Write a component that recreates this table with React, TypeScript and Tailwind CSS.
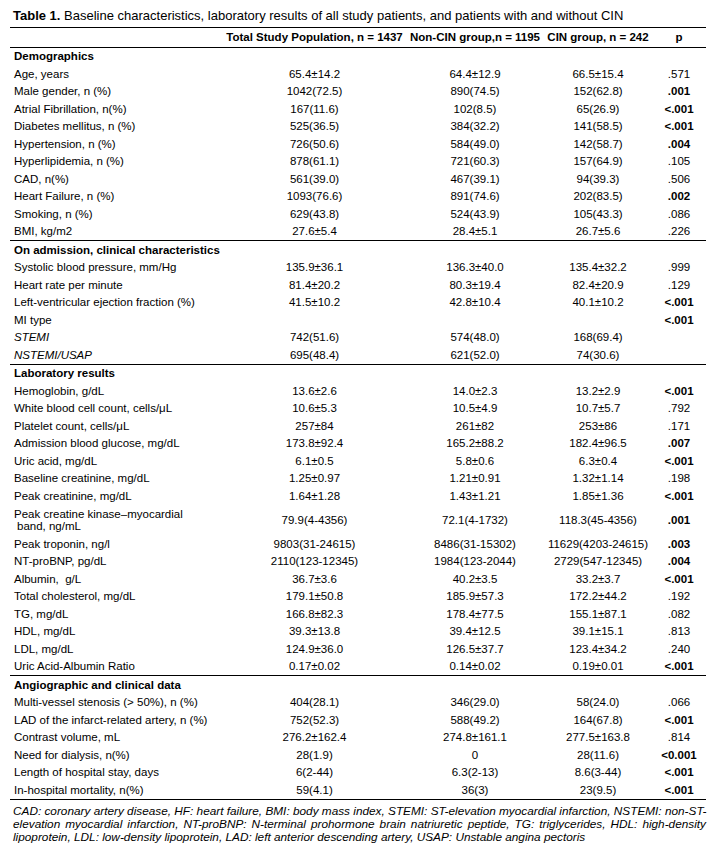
import React from "react";

type Row = {
  label: React.ReactNode;
  v?: [string, string, string];
  p?: string;
  bold?: boolean;
  italic?: boolean;
  tall?: boolean;
};

type Section = { title: string; rows: Row[] };

const sections: Section[] = [
  {
    title: "Demographics",
    rows: [
      { label: "Age, years", v: ["65.4±14.2", "64.4±12.9", "66.5±15.4"], p: ".571" },
      { label: "Male gender, n (%)", v: ["1042(72.5)", "890(74.5)", "152(62.8)"], p: ".001", bold: true },
      { label: "Atrial Fibrillation, n(%)", v: ["167(11.6)", "102(8.5)", "65(26.9)"], p: "<.001", bold: true },
      { label: "Diabetes mellitus, n (%)", v: ["525(36.5)", "384(32.2)", "141(58.5)"], p: "<.001", bold: true },
      { label: "Hypertension, n (%)", v: ["726(50.6)", "584(49.0)", "142(58.7)"], p: ".004", bold: true },
      { label: "Hyperlipidemia, n (%)", v: ["878(61.1)", "721(60.3)", "157(64.9)"], p: ".105" },
      { label: "CAD, n(%)", v: ["561(39.0)", "467(39.1)", "94(39.3)"], p: ".506" },
      { label: "Heart Failure, n (%)", v: ["1093(76.6)", "891(74.6)", "202(83.5)"], p: ".002", bold: true },
      { label: "Smoking, n (%)", v: ["629(43.8)", "524(43.9)", "105(43.3)"], p: ".086" },
      { label: "BMI, kg/m2", v: ["27.6±5.4", "28.4±5.1", "26.7±5.6"], p: ".226" },
    ],
  },
  {
    title: "On admission, clinical characteristics",
    rows: [
      { label: "Systolic blood pressure, mm/Hg", v: ["135.9±36.1", "136.3±40.0", "135.4±32.2"], p: ".999" },
      { label: "Heart rate per minute", v: ["81.4±20.2", "80.3±19.4", "82.4±20.9"], p: ".129" },
      { label: "Left-ventricular ejection fraction (%)", v: ["41.5±10.2", "42.8±10.4", "40.1±10.2"], p: "<.001", bold: true },
      { label: "MI type", v: ["", "", ""], p: "<.001", bold: true },
      { label: "STEMI", italic: true, v: ["742(51.6)", "574(48.0)", "168(69.4)"], p: "" },
      { label: "NSTEMI/USAP", italic: true, v: ["695(48.4)", "621(52.0)", "74(30.6)"], p: "" },
    ],
  },
  {
    title: "Laboratory results",
    rows: [
      { label: "Hemoglobin, g/dL", v: ["13.6±2.6", "14.0±2.3", "13.2±2.9"], p: "<.001", bold: true },
      { label: "White blood cell count, cells/μL", v: ["10.6±5.3", "10.5±4.9", "10.7±5.7"], p: ".792" },
      { label: "Platelet count, cells/μL", v: ["257±84", "261±82", "253±86"], p: ".171" },
      { label: "Admission blood glucose, mg/dL", v: ["173.8±92.4", "165.2±88.2", "182.4±96.5"], p: ".007", bold: true },
      { label: "Uric acid, mg/dL", v: ["6.1±0.5", "5.8±0.6", "6.3±0.4"], p: "<.001", bold: true },
      { label: "Baseline creatinine, mg/dL", v: ["1.25±0.97", "1.21±0.91", "1.32±1.14"], p: ".198" },
      { label: "Peak creatinine, mg/dL", v: ["1.64±1.28", "1.43±1.21", "1.85±1.36"], p: "<.001", bold: true },
      {
        label: (
          <>
            <span className="block">Peak creatine kinase–myocardial</span>
            <span className="block pl-[3px]">band, ng/mL</span>
          </>
        ),
        tall: true,
        v: ["79.9(4-4356)", "72.1(4-1732)", "118.3(45-4356)"],
        p: ".001",
        bold: true,
      },
      { label: "Peak troponin, ng/l", v: ["9803(31-24615)", "8486(31-15302)", "11629(4203-24615)"], p: ".003", bold: true },
      { label: "NT-proBNP, pg/dL", v: ["2110(123-12345)", "1984(123-2044)", "2729(547-12345)"], p: ".004", bold: true },
      { label: "Albumin,  g/L", v: ["36.7±3.6", "40.2±3.5", "33.2±3.7"], p: "<.001", bold: true },
      { label: "Total cholesterol, mg/dL", v: ["179.1±50.8", "185.9±57.3", "172.2±44.2"], p: ".192" },
      { label: "TG, mg/dL", v: ["166.8±82.3", "178.4±77.5", "155.1±87.1"], p: ".082" },
      { label: "HDL, mg/dL", v: ["39.3±13.8", "39.4±12.5", "39.1±15.1"], p: ".813" },
      { label: "LDL, mg/dL", v: ["124.9±36.0", "126.5±37.7", "123.4±34.2"], p: ".240" },
      { label: "Uric Acid-Albumin Ratio", v: ["0.17±0.02", "0.14±0.02", "0.19±0.01"], p: "<.001", bold: true },
    ],
  },
  {
    title: "Angiographic and clinical data",
    rows: [
      { label: "Multi-vessel stenosis (> 50%), n (%)", v: ["404(28.1)", "346(29.0)", "58(24.0)"], p: ".066" },
      { label: "LAD of the infarct-related artery, n (%)", v: ["752(52.3)", "588(49.2)", "164(67.8)"], p: "<.001", bold: true },
      { label: "Contrast volume, mL", v: ["276.2±162.4", "274.8±161.1", "277.5±163.8"], p: ".814" },
      { label: "Need for dialysis, n(%)", v: ["28(1.9)", "0", "28(11.6)"], p: "<0.001", bold: true },
      { label: "Length of hospital stay, days", v: ["6(2-44)", "6.3(2-13)", "8.6(3-44)"], p: "<.001", bold: true },
      { label: "In-hospital mortality, n(%)", v: ["59(4.1)", "36(3)", "23(9.5)"], p: "<.001", bold: true },
    ],
  },
];

const grid = "grid grid-cols-[213px_183px_138px_108px_54px]";

function DataRow({ r }: { r: Row }) {
  return (
    <div className={`${grid} ${r.tall ? "h-[30.5px]" : "h-[17.5px]"} items-center`}>
      <div className={`pl-[4px] whitespace-pre ${r.italic ? "italic" : ""}`}>{r.label}</div>
      <div className="text-center">{r.v?.[0]}</div>
      <div className="text-center">{r.v?.[1]}</div>
      <div className="text-center">{r.v?.[2]}</div>
      <div className={`text-center ${r.bold ? "font-bold" : ""}`}>{r.p}</div>
    </div>
  );
}

export default function App() {
  return (
    <div className="w-[717px] h-[856px] bg-white text-black font-['Liberation_Sans',Arial,sans-serif] px-[10px] pt-[8px]">
      <div className="pl-[3px] text-[13px] leading-[16px] whitespace-nowrap">
        <span className="font-bold">Table 1.</span> Baseline characteristics, laboratory results of all study patients, and patients with and without CIN
      </div>
      <div className="mt-[3px] w-[696px] border-t border-b border-black text-[11.5px] leading-[12px]">
        <div className={`${grid} h-[19.5px] items-center border-b border-black font-bold whitespace-nowrap`}>
          <div />
          <div className="text-center">Total Study Population, n = 1437</div>
          <div className="text-center">Non-CIN group,n = 1195</div>
          <div className="text-center">CIN group, n = 242</div>
          <div className="text-center">p</div>
        </div>
        {sections.map((s, i) => (
          <div key={s.title} className={i > 0 ? "border-t border-black" : ""}>
            <div className="h-[17.5px] flex items-center pl-[4px] font-bold">{s.title}</div>
            {s.rows.map((r, j) => (
              <DataRow key={j} r={r} />
            ))}
          </div>
        ))}
      </div>
      <div className="mt-[5px] pl-[3px] w-[696px] text-[11.8px] leading-[13px] italic">
        <p className="whitespace-nowrap text-justify [text-align-last:justify]">
          CAD: coronary artery disease, HF: heart failure, BMI: body mass index, STEMI: ST-elevation myocardial infarction, NSTEMI: non-ST-
        </p>
        <p className="whitespace-nowrap text-justify [text-align-last:justify]">
          elevation myocardial infarction, NT-proBNP: N-terminal prohormone brain natriuretic peptide, TG: triglycerides, HDL: high-density
        </p>
        <p className="whitespace-nowrap">
          lipoprotein, LDL: low-density lipoprotein, LAD: left anterior descending artery, USAP: Unstable angina pectoris
        </p>
      </div>
    </div>
  );
}
